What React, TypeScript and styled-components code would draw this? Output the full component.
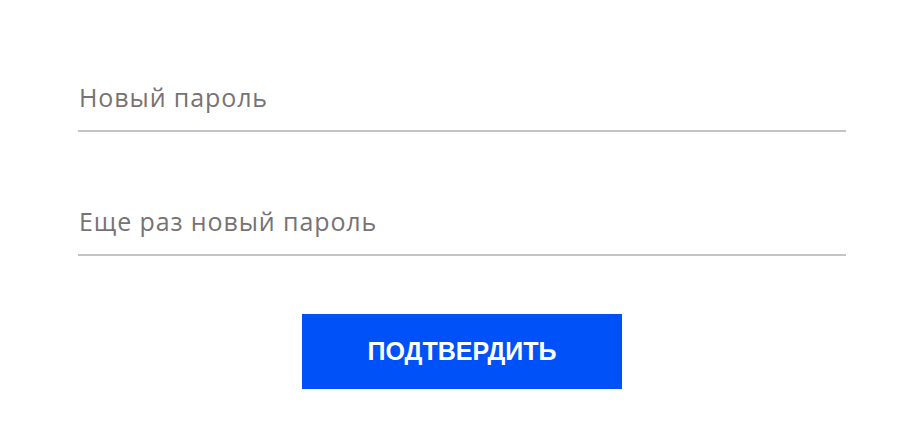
import React, { useState } from "react";
import styled, { createGlobalStyle } from "styled-components";

const GlobalStyle = createGlobalStyle`
  html, body {
    margin: 0;
    padding: 0;
    background: #ffffff;
  }
`;

const Page = styled.div`
  padding: 72px 72px 0 78px;
`;

const Form = styled.form`
  width: 768px;
  display: flex;
  flex-direction: column;
`;

const Field = styled.div<{ $gap: number }>`
  margin-bottom: ${(props) => props.$gap}px;
`;

const Input = styled.input`
  width: 100%;
  height: 60px;
  box-sizing: border-box;
  border: none;
  border-bottom: 2px solid #c4c4c4;
  padding: 0 0 9px 1px;
  outline: none;
  background: transparent;
  font-family: "Open Sans", "Liberation Sans", sans-serif;
  font-size: 25px;
  letter-spacing: 0.9px;
  color: #333;

  &::placeholder {
    color: #777373;
  }
`;

const ButtonRow = styled.div`
  display: flex;
  justify-content: center;
`;

const Button = styled.button`
  width: 320px;
  height: 75px;
  border: none;
  background: #0051f7;
  color: #ffffff;
  font-family: "Liberation Sans", Arial, sans-serif;
  font-weight: 700;
  font-size: 25px;
  text-transform: uppercase;
  cursor: pointer;
  &:hover {
    opacity: 0.9;
  }
`;

const App = () => {
  const [password, setPassword] = useState("");
  const [repeat, setRepeat] = useState("");

  return (
    <Page>
      <GlobalStyle />
      <Form onSubmit={(e) => e.preventDefault()}>
        <Field $gap={64}>
          <Input
            type="password"
            placeholder="Новый пароль"
            value={password}
            onChange={(e) => setPassword(e.target.value)}
          />
        </Field>
        <Field $gap={58}>
          <Input
            type="password"
            placeholder="Еще раз новый пароль"
            value={repeat}
            onChange={(e) => setRepeat(e.target.value)}
          />
        </Field>
        <ButtonRow>
          <Button type="submit">Подтвердить</Button>
        </ButtonRow>
      </Form>
    </Page>
  );
};

export default App;
